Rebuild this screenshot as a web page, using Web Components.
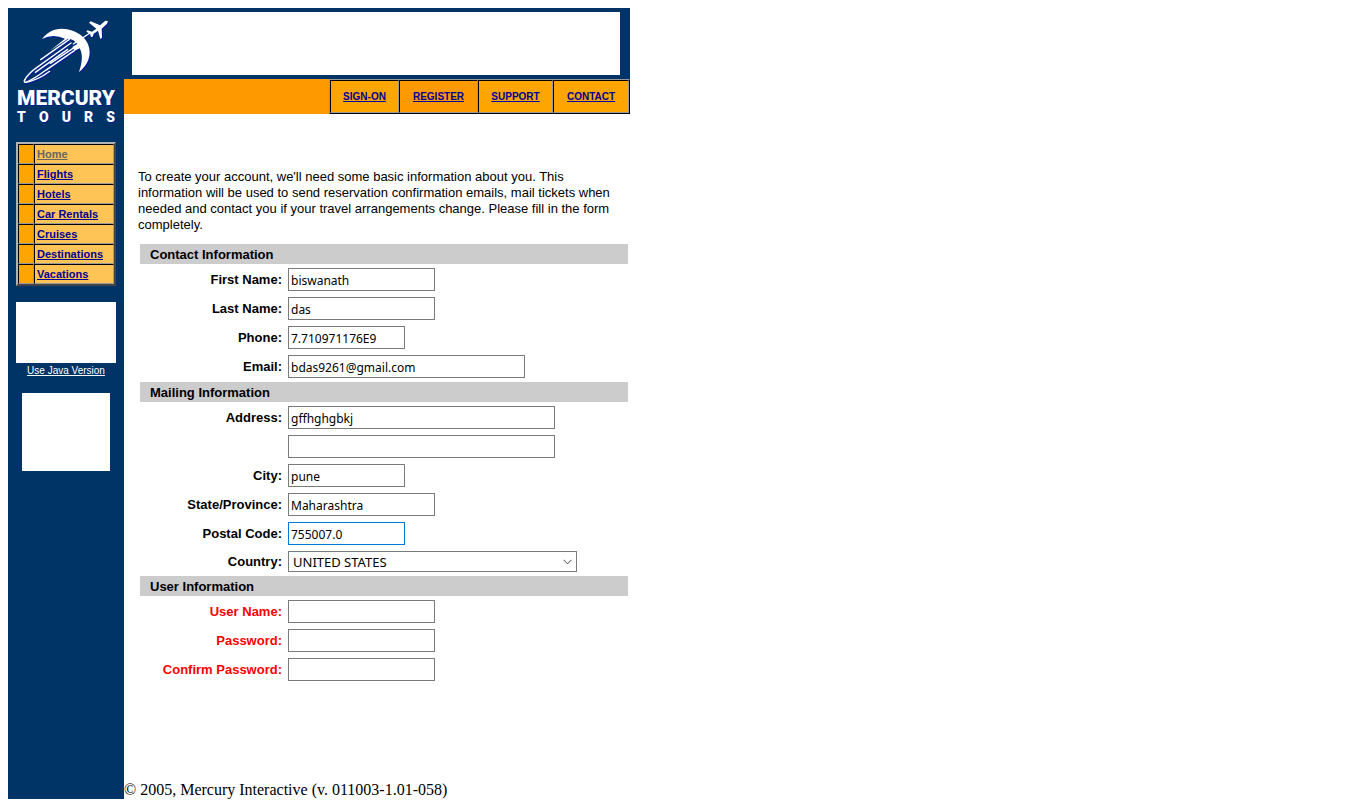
<!DOCTYPE html>
<html lang="en">
<head>
<meta charset="utf-8">
<title>Register: Mercury Tours</title>
<style>
body { margin: 8px; background: #fff; color: #000; font-family: "Liberation Sans", Arial, sans-serif; font-size: 13px; }
</style>
</head>
<body>
<mt-page>
  <mt-sidebar slot="side"></mt-sidebar>
  <mt-topnav slot="top"></mt-topnav>
  <mt-intro>To create your account, we'll need some basic information about you. This information will be used to send reservation confirmation emails, mail tickets when needed and contact you if your travel arrangements change. Please fill in the form completely.</mt-intro>
  <mt-section heading="Contact Information">
    <mt-field label="First Name:" size="medium" value="biswanath"></mt-field>
    <mt-field label="Last Name:" size="medium" value="das"></mt-field>
    <mt-field label="Phone:" size="small" value="7.710971176E9"></mt-field>
    <mt-field label="Email:" size="large" value="bdas9261@gmail.com"></mt-field>
  </mt-section>
  <mt-section heading="Mailing Information">
    <mt-field label="Address:" size="wide" value="gffhghgbkj"></mt-field>
    <mt-field hint="Address line 2" size="wide"></mt-field>
    <mt-field label="City:" size="small" value="pune"></mt-field>
    <mt-field label="State/Province:" size="medium" value="Maharashtra"></mt-field>
    <mt-field label="Postal Code:" size="small" value="755007.0" active></mt-field>
    <mt-field label="Country:" type="select" size="full" value="UNITED STATES"></mt-field>
  </mt-section>
  <mt-section heading="User Information">
    <mt-field label="User Name:" size="medium" required></mt-field>
    <mt-field label="Password:" type="password" size="medium" required></mt-field>
    <mt-field label="Confirm Password:" type="password" size="medium" required></mt-field>
  </mt-section>
  <mt-footer slot="foot">© 2005, Mercury Interactive (v. 011003-1.01-058)</mt-footer>
</mt-page>

<script>
class Base extends HTMLElement {
  connectedCallback() {
    if (!this.shadowRoot) this.attachShadow({ mode: "open" }).innerHTML = this.render();
  }
}

customElements.define("mt-page", class extends Base {
  render() {
    return `<style>
      :host { display: grid; grid-template-columns: 116px minmax(0, 1fr); max-width: 622px; }
      aside { background: #003366; }
      .right { display: flex; flex-direction: column; }
      main { padding: 55px 2px 0 14px; }
      footer { padding-top: 96px; }
    </style>
    <aside><slot name="side"></slot></aside>
    <div class="right">
      <slot name="top"></slot>
      <main><slot></slot></main>
      <footer><slot name="foot"></slot></footer>
    </div>`;
  }
});

customElements.define("mt-logo", class extends Base {
  render() {
    return `<style>
      :host { display: block; color: #fff; font-family: Roboto, sans-serif; font-weight: 900; text-shadow: 1px 1px 0 #001f99; }
      svg { display: block; width: 100%; height: 80px; }
      .name, .tours { display: flex; justify-content: space-between; margin: 0 9px; }
      .name { font-size: 21px; line-height: 20px; }
      .tours { font-size: 14px; line-height: 14px; padding-top: 2px; height: 12px; }
    </style>
    <svg viewBox="24 24 348 240" aria-hidden="true">
      <defs><g id="m">
        <path stroke="none" d="M126 117C141 98 160 86 185 86C232 87 270 118 269 157C269 180 257 201 237 216C246 191 250 164 239 145L224 152L217 141L232 132Q222 117 204 116L150 152L195 116Q159 100 126 117Z"/>
        <path stroke="none" d="M324 63L316 62L300 76L272 64L267 68L289 86L276 95L262 91L259 95L270 101L273 111L278 110L281 101L294 92L301 117L306 113L305 86L321 71Z"/>
        <g fill="none" stroke-width="4" stroke-linecap="round">
          <path d="M270 99L220 132"/>
          <path d="M208 118L122 179"/>
          <path d="M213 129L111 202Q83 221 73 242"/>
          <path d="M219 145L151 190"/>
          <path d="M223 152L137 211Q100 239 77 247Q70 248 75 238"/>
          <path d="M203 148L106 217"/>
          <path d="M149 214Q112 242 76 247"/>
        </g>
      </g></defs>
      <use href="#m" x="3" y="3" fill="#001f99" stroke="#001f99"/>
      <use href="#m" fill="#fff" stroke="#fff"/>
    </svg>
    <div class="name">MERCURY</div>
    <div class="tours"><span>T</span><span>O</span><span>U</span><span>R</span><span>S</span></div>`;
  }
});

customElements.define("mt-sidebar", class extends Base {
  render() {
    const rows = ["Home", "Flights", "Hotels", "Car Rentals", "Cruises", "Destinations", "Vacations"]
      .map((t, i) => `<tr><td class="mark"></td><td><a href="#"${i ? "" : ' class="here"'}>${t}</a></td></tr>`).join("");
    return `<style>
      :host { display: flex; flex-direction: column; }
      table { box-sizing: border-box; margin: 20px 8px 16px; border: 2px solid; border-color: #b2b2b2 #444 #444 #b2b2b2; border-spacing: 0; width: 100px; table-layout: fixed; font-size: 11px; font-weight: bold; line-height: 14px; }
      td { box-sizing: border-box; height: 20px; padding: 0 2px; border: 1px solid; border-color: #000 #999 #999 #000; background: #ffc455; }
      .mark { width: 16px; background: #ffa500; }
      a { color: #000099; }
      .here { color: #666; }
      .ad { background: #fff; height: 61px; margin: 0 8px; }
      .ad.small { height: 78px; margin: 14px 14px 0; }
      .java { color: #fff; font: 10px/16px "Liberation Sans", Arial, sans-serif; text-align: center; }
    </style>
    <mt-logo></mt-logo>
    <table>${rows}</table>
    <div class="ad"></div>
    <a class="java" href="#">Use Java Version</a>
    <div class="ad small"></div>`;
  }
});

customElements.define("mt-topnav", class extends Base {
  render() {
    return `<style>
      :host { display: block; }
      .banner { background: #003366; padding: 4px 10px 4px 8px; }
      .banner div { background: #fff; height: 63px; }
      nav { display: flex; justify-content: flex-end; background: #ff9900; }
      ul { display: flex; margin: 0; padding: 0; list-style: none; border: 1px solid; border-color: #999 #000 #000 #999; font-size: 10px; font-weight: bold; }
      li { box-sizing: border-box; width: 75px; height: 33px; display: flex; align-items: center; justify-content: center; border: 1px solid; border-color: #000 #999 #999 #000; background: #ffa500; }
      li:first-child { width: 69px; }
      li:nth-child(2) { width: 79px; background: #ff9900; }
      li:last-child { width: 76px; }
      a { color: #000099; }
    </style>
    <div class="banner"><div></div></div>
    <nav><ul>
      <li><a href="#">SIGN-ON</a></li>
      <li><a href="#">REGISTER</a></li>
      <li><a href="#">SUPPORT</a></li>
      <li><a href="#">CONTACT</a></li>
    </ul></nav>`;
  }
});

customElements.define("mt-intro", class extends Base {
  render() {
    return `<style>
      :host { display: block; line-height: 16px; }
      p { margin: 0 8px 11px 0; }
    </style><p><slot></slot></p>`;
  }
});

customElements.define("mt-section", class extends Base {
  render() {
    return `<style>
      :host { display: block; margin-left: 2px; }
      h2 { margin: 0; padding: 1px 10px 0; background: #ccc; font-size: 13px; line-height: 19px; }
      .rows { display: flex; flex-direction: column; gap: 6px; padding: 4px 0; }
    </style>
    <h2>${this.getAttribute("heading")}</h2>
    <div class="rows"><slot></slot></div>`;
  }
});

customElements.define("mt-field", class extends Base {
  render() {
    const g = n => this.getAttribute(n) || "";
    const type = g("type") || "text";
    const cls = g("size") + (this.hasAttribute("active") ? " active" : "");
    const control = type === "select"
      ? `<span class="pick full"><select id="c"><option>${g("value")}</option></select><svg viewBox="0 0 9 6" aria-hidden="true"><path d="M.5 .8L4.5 4.8L8.5 .8" fill="none" stroke="#444"/></svg></span>`
      : `<input id="c" class="${cls}" type="${type}" value="${g("value")}"${g("hint") ? ` aria-label="${g("hint")}"` : ""}>`;
    return `<style>
      :host { display: grid; grid-template-columns: 142px minmax(0, 1fr); column-gap: 6px; align-items: center; }
      label { text-align: right; font-weight: bold; line-height: 21px; }
      :host([required]) label { color: #ff0000; }
      input, select { box-sizing: border-box; margin: 0; border: 1px solid #7a7a7a; border-radius: 0; background: #fff; color: #000; font: 12px "Noto Sans", Tahoma, sans-serif; outline: none; }
      input { display: block; height: 23px; padding: 2px 2px 0; grid-column: 2; }
      .small { width: 117px; } .medium { width: 147px; } .large { width: 237px; } .wide { width: 267px; } .full { width: 289px; }
      .active { border-color: #0078d7; }
      .pick { position: relative; display: block; height: 21px; }
      select { display: block; width: 100%; height: 21px; padding: 0 4px; appearance: none; font-size: 13px; }
      svg { position: absolute; right: 5px; top: 8px; width: 9px; height: 6px; pointer-events: none; }
    </style>
    ${g("label") ? `<label for="c">${g("label")}</label>` : ""}${control}`;
  }
});

customElements.define("mt-footer", class extends Base {
  render() {
    return `<style>
      :host { display: block; font: 16px/18px "Liberation Serif", "Times New Roman", serif; }
    </style><slot></slot>`;
  }
});
</script>
</body>
</html>
